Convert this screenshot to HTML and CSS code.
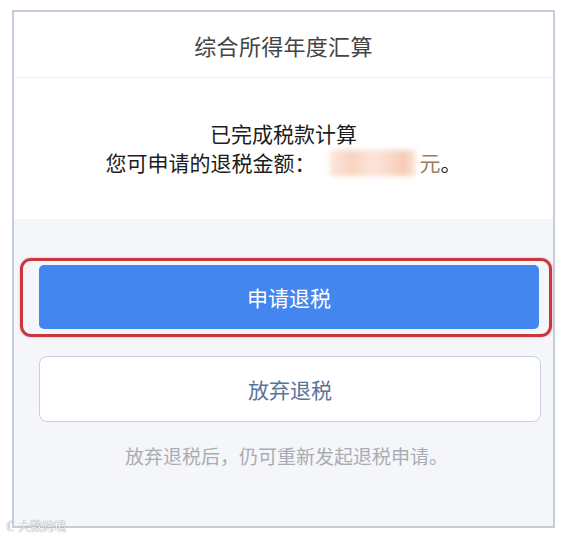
FILE: index.html
```html
<!DOCTYPE html>
<html lang="zh-CN">
<head>
<meta charset="utf-8">
<title>综合所得年度汇算</title>
<link rel="stylesheet" href="styles.css">
</head>
<body>
<div class="frame">
  <header class="header">综合所得年度汇算</header>
  <section class="result">
    <div class="line strong">已完成税款计算</div>
    <div class="line">您可申请的退税金额：<span class="amount"><span class="blur"></span></span><span class="unit">元</span>。</div>
  </section>
  <section class="actions">
    <div class="highlight">
      <button class="btn btn-primary">申请退税</button>
    </div>
    <button class="btn btn-secondary">放弃退税</button>
    <p class="hint">放弃退税后，仍可重新发起退税申请。</p>
  </section>
</div>
<div class="watermark"><span class="wm-icon">ℂ</span><span class="wm-text">大数跨境</span></div>
</body>
</html>
```
FILE: styles.css
```css
* { box-sizing: border-box; }
html, body { margin: 0; padding: 0; background: #ffffff; }
body {
  font-family: "Noto Sans CJK SC", "Noto Sans", sans-serif;
  width: 563px;
  height: 540px;
  position: relative;
  overflow: hidden;
}
.frame {
  margin: 10px 0 0 12px;
  width: 543px;
  height: 518px;
  border: 2px solid #c4ceda;
  display: flex;
  flex-direction: column;
  background: #f4f6fa;
}
.header {
  height: 66px;
  background: #fff;
  border-bottom: 1px solid #eceef2;
  display: flex;
  align-items: center;
  justify-content: center;
  font-size: 22px;
  color: #444;
  letter-spacing: 0.3px;
  padding-top: 1px;
}
.result {
  background: #fff;
  height: 141px;
  padding-top: 41px;
  display: flex;
  flex-direction: column;
  align-items: center;
}
.line {
  font-size: 21px;
  line-height: 29px;
  color: #1c1c1c;
  display: flex;
  align-items: center;
}
.amount {
  width: 86px;
  height: 26px;
  margin: 0 4px 0 14px;
  position: relative;
  display: inline-block;
}
.blur {
  position: absolute;
  inset: 0;
  background: linear-gradient(90deg, #fde6da 0%, #f9d3c0 25%, #fce5d9 50%, #f9d6c4 75%, #f5c9b2 86%, #fde9df 100%);
  filter: blur(2.5px);
}
.unit { color: #9a7b63; }
.actions {
  flex: 1;
  padding: 39px 0 0 6px;
  display: flex;
  flex-direction: column;
  align-items: flex-start;
}
.highlight {
  width: 532px;
  height: 79px;
  border: 3px solid #c9363b;
  border-radius: 11px;
  padding: 4px 0 0 16px;
  box-shadow: 0 0 2px rgba(201, 54, 59, 0.5);
}
.btn {
  font-family: "Noto Sans CJK SC", "Noto Sans", sans-serif;
  font-size: 21px;
  width: 500px;
  display: flex;
  align-items: center;
  justify-content: center;
  cursor: pointer;
}
.btn-primary {
  height: 64px;
  background: #4386ef;
  color: #fff;
  border: none;
  border-radius: 5px;
}
.btn-secondary {
  margin: 19px 0 0 19px;
  width: 502px;
  height: 66px;
  background: #fff;
  color: #5a7398;
  border: 1.5px solid #c9d1dc;
  border-radius: 8px;
}
.hint {
  margin: 21px 0 0 0;
  width: 100%;
  text-align: center;
  font-size: 19px;
  line-height: 26px;
  color: #a9acb1;
}
.watermark {
  position: absolute;
  left: 6px;
  top: 516px;
  display: flex;
  align-items: center;
  gap: 4px;
  color: #fff;
  font-size: 12px;
  text-shadow: 0 0 1px #777, 0 0 1px #777;
  opacity: 0.85;
}
.wm-icon { font-size: 13px; }
```
